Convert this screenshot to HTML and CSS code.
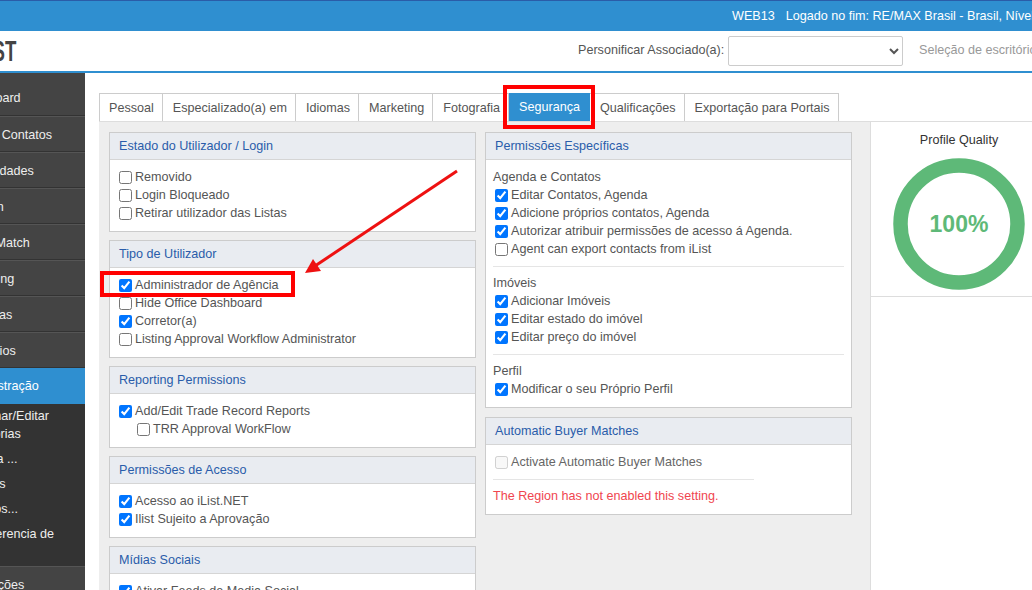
FILE: index.html
```html
<!DOCTYPE html>
<html lang="pt-br">

<head>
  <meta charset="UTF-8">
  <meta name="viewport" content="width=device-width, initial-scale=1.0">
  <title>Segurança - iList</title>
  <link rel="stylesheet" href="styles.css">
</head>

<body>
  <div class="topbar">
    <span>WEB13</span>
    <span>Logado no fim: RE/MAX Brasil - Brasil, Nível de Acesso</span>
  </div>

  <div class="header">
    <div class="logo"><span>iLIST</span></div>
    <label class="impersonate">Personificar Associado(a):</label>
    <select class="impersonate-select"></select>
    <span class="office">Seleção de escritório</span>
  </div>

  <div class="layout">
    <div class="sidebar">
      <a class="nav-item">Dashboard</a>
      <a class="nav-item">Buscar Contatos</a>
      <a class="nav-item">Propriedades</a>
      <a class="nav-item">Position</a>
      <a class="nav-item">Buyer Match</a>
      <a class="nav-item">Marketing</a>
      <a class="nav-item">Reservas</a>
      <a class="nav-item">Relatórios</a>
      <a class="nav-item active">Administração</a>
      <div class="submenu">
        <a>Adicionar/Editar<br>Categorias</a>
        <a>Agenda ...</a>
        <a>Equipas</a>
        <a>Modelos...</a>
        <a>Transferencia de<br>Lead</a>
      </div>
      <a class="nav-item">Transações</a>
    </div>

    <div class="main">
      <div class="tabs">
        <a class="tab">Pessoal</a>
        <a class="tab">Especializado(a) em</a>
        <a class="tab">Idiomas</a>
        <a class="tab">Marketing</a>
        <a class="tab">Fotografia</a>
        <a class="tab selected">Segurança</a>
        <a class="tab">Qualificações</a>
        <a class="tab">Exportação para Portais</a>
      </div>

      <div class="content">
        <div class="forms">
          <div class="column">
            <div class="panel">
              <div class="panel-title">Estado do Utilizador / Login</div>
              <div class="panel-body">
                <label class="check"><input type="checkbox">Removido</label>
                <label class="check"><input type="checkbox">Login Bloqueado</label>
                <label class="check"><input type="checkbox">Retirar utilizador das Listas</label>
              </div>
            </div>

            <div class="panel">
              <div class="panel-title">Tipo de Utilizador</div>
              <div class="panel-body">
                <label class="check"><input type="checkbox" checked>Administrador de Agência</label>
                <label class="check"><input type="checkbox">Hide Office Dashboard</label>
                <label class="check"><input type="checkbox" checked>Corretor(a)</label>
                <label class="check"><input type="checkbox">Listing Approval Workflow Administrator</label>
              </div>
            </div>

            <div class="panel">
              <div class="panel-title">Reporting Permissions</div>
              <div class="panel-body">
                <label class="check"><input type="checkbox" checked>Add/Edit Trade Record Reports</label>
                <label class="check nested"><input type="checkbox">TRR Approval WorkFlow</label>
              </div>
            </div>

            <div class="panel">
              <div class="panel-title">Permissões de Acesso</div>
              <div class="panel-body">
                <label class="check"><input type="checkbox" checked>Acesso ao iList.NET</label>
                <label class="check"><input type="checkbox" checked>Ilist Sujeito a Aprovação</label>
              </div>
            </div>

            <div class="panel">
              <div class="panel-title">Mídias Sociais</div>
              <div class="panel-body">
                <label class="check"><input type="checkbox" checked>Ativar Feeds de Media Social</label>
              </div>
            </div>
          </div>

          <div class="column">
            <div class="panel">
              <div class="panel-title">Permissões Específicas</div>
              <div class="panel-body">
                <div class="group-name">Agenda e Contatos</div>
                <label class="check"><input type="checkbox" checked>Editar Contatos, Agenda</label>
                <label class="check"><input type="checkbox" checked>Adicione próprios contatos, Agenda</label>
                <label class="check"><input type="checkbox" checked>Autorizar atribuir permissões de acesso á Agenda.</label>
                <label class="check"><input type="checkbox">Agent can export contacts from iList</label>
                <hr>
                <div class="group-name">Imóveis</div>
                <label class="check"><input type="checkbox" checked>Adicionar Imóveis</label>
                <label class="check"><input type="checkbox" checked>Editar estado do imóvel</label>
                <label class="check"><input type="checkbox" checked>Editar preço do imóvel</label>
                <hr>
                <div class="group-name">Perfil</div>
                <label class="check"><input type="checkbox" checked>Modificar o seu Próprio Perfil</label>
              </div>
            </div>

            <div class="panel">
              <div class="panel-title">Automatic Buyer Matches</div>
              <div class="panel-body">
                <label class="check off"><input type="checkbox" disabled>Activate Automatic Buyer Matches</label>
                <hr class="short">
                <div class="warning">The Region has not enabled this setting.</div>
              </div>
            </div>
          </div>
        </div>

        <div class="profile">
          <div class="quality">
            <div class="quality-title">Profile Quality</div>
            <svg class="ring" width="132" height="132" viewBox="0 0 132 132">
              <circle cx="66" cy="66" r="58.5" fill="none" stroke="#5eb978" stroke-width="14.5"/>
              <text x="66" y="74" text-anchor="middle">100%</text>
            </svg>
          </div>
        </div>
      </div>
    </div>
  </div>

  <!-- marcacoes vermelhas por cima do print -->
  <div class="mark mark-tab"></div>
  <div class="mark mark-admin"></div>
  <svg class="arrow" width="1032" height="590" viewBox="0 0 1032 590">
    <line x1="457" y1="171" x2="315" y2="266" stroke="#ee1111" stroke-width="3"/>
    <polygon points="305,273 313,259 321,271" fill="#ee1111"/>
  </svg>
</body>

</html>
```

FILE: styles.css
```css
html,
body {
  height: 100%;
}

body {
  margin: 0;
  position: relative;
  overflow: hidden;
  display: flex;
  flex-direction: column;
  background-color: #fff;
  color: #555;
  font-family: "Liberation Sans", Arial, sans-serif;
  font-size: 12.6px;
}

.topbar {
  height: 30px;
  flex-shrink: 0;
  display: flex;
  align-items: center;
  gap: 11px;
  padding-left: 732px;
  white-space: nowrap;
  overflow: hidden;
  background-color: #2f8fd0;
  border-top: 1px solid #2a5ca8;
  color: #fff;
}

.header {
  height: 40px;
  flex-shrink: 0;
  display: flex;
  align-items: center;
  white-space: nowrap;
  overflow: hidden;
  border-bottom: 2px solid #2f8fd0;
}

.logo {
  width: 16px;
  flex-shrink: 0;
  display: flex;
  justify-content: flex-end;
  margin-right: 562px;
  color: #444;
  font-size: 30px;
  font-weight: bold;
}

.logo span {
  transform: scaleX(0.62);
  transform-origin: right center;
}

.impersonate {
  width: 150px;
  flex-shrink: 0;
  margin-bottom: 3px;
}

.impersonate-select {
  width: 175px;
  height: 30px;
  flex-shrink: 0;
  background-color: #fff;
  border: 1px solid #ccc;
  border-radius: 2px;
  color: #555;
}

.office {
  margin-left: 16px;
  margin-bottom: 3px;
  color: #999;
}

.layout {
  flex: 1;
  display: flex;
  min-height: 0;
}

.sidebar {
  width: 85px;
  flex-shrink: 0;
  padding-top: 7px;
  overflow: hidden;
  background-color: #444;
  color: #eee;
}

.nav-item {
  display: flex;
  align-items: center;
  height: 33px;
  padding-top: 1px;
  text-indent: -41px;
  white-space: nowrap;
  border-top: 1px solid #555;
  border-bottom: 1px solid #333;
}

.nav-item:first-child {
  height: 34px;
  padding-top: 0;
  border-top: 1px solid #444;
}

.nav-item.active {
  height: 34px;
  padding-top: 0;
  background-color: #2f8fd0;
  color: #fff;
  border-color: #2f8fd0;
}

.submenu {
  display: flex;
  flex-direction: column;
  gap: 7px;
  height: 159px;
  padding-top: 3px;
  line-height: 18px;
  background-color: #333;
  white-space: nowrap;
}

.submenu a {
  margin-left: -40px;
}

.main {
  flex: 1;
  min-width: 0;
  display: flex;
  flex-direction: column;
  padding: 20px 0 0 14px;
  overflow: hidden;
}

.tabs {
  display: flex;
  height: 28px;
  flex-shrink: 0;
  white-space: nowrap;
}

.tab {
  display: flex;
  align-items: center;
  padding: 0 8px 0 10px;
  border: 1px solid #ccc;
  border-bottom: 0;
  border-left: 0;
}

.tab:first-child {
  padding-left: 9px;
  border-left: 1px solid #ccc;
}

.tab.selected {
  padding: 0 10px;
  background-color: #2f8fd0;
  color: #fff;
  border: 0;
}

.content {
  flex: 1;
  display: flex;
  min-height: 0;
  border-top: 1px solid #ddd;
}

.forms {
  width: 771px;
  flex-shrink: 0;
  display: flex;
  gap: 9px;
  padding: 10px 18px 0 10px;
  box-sizing: border-box;
  background-color: #eee;
}

.column {
  width: 367px;
  flex-shrink: 0;
}

.panel {
  margin-bottom: 8px;
  background-color: #fff;
  border: 1px solid #ccc;
}

.column:last-child .panel {
  margin-bottom: 9px;
}

.panel-title {
  height: 26px;
  line-height: 27px;
  padding-left: 9px;
  background-color: #e9ecf1;
  border-bottom: 1px solid #d5d5d5;
  color: #2a5caa;
}

.panel-body {
  padding: 8px 7px 9px;
}

.check {
  display: flex;
  align-items: center;
  height: 18px;
  white-space: nowrap;
}

.check input {
  width: 13px;
  height: 13px;
  margin: 0 3px 0 2px;
  flex-shrink: 0;
}

.check.nested {
  padding-left: 18px;
}

.check.off {
  color: #666;
}

.group-name {
  height: 18px;
  line-height: 18px;
}

.panel-body hr {
  margin: 8px 0 7px;
  border: 0;
  border-top: 1px solid #e5e5e5;
}

.panel-body hr.short {
  width: 261px;
}

.warning {
  height: 18px;
  line-height: 18px;
  color: #f0454f;
}

.profile {
  width: 176px;
  flex-shrink: 0;
  border-left: 1px solid #ddd;
}

.quality {
  height: 174px;
  display: flex;
  flex-direction: column;
  align-items: center;
  border-bottom: 1px solid #ddd;
}

.quality-title {
  margin-top: 11px;
  margin-bottom: 11px;
  color: #333;
}

.ring text {
  fill: #5eb978;
  font-family: "Liberation Sans", Arial, sans-serif;
  font-size: 23px;
  font-weight: bold;
}

.mark {
  position: absolute;
  box-sizing: border-box;
  border: 4px solid #f00;
}

.mark-tab {
  left: 503px;
  top: 85px;
  width: 92px;
  height: 44px;
}

.mark-admin {
  left: 100px;
  top: 271px;
  width: 195px;
  height: 26px;
}

.arrow {
  position: absolute;
  left: 0;
  top: 0;
  pointer-events: none;
}
```
